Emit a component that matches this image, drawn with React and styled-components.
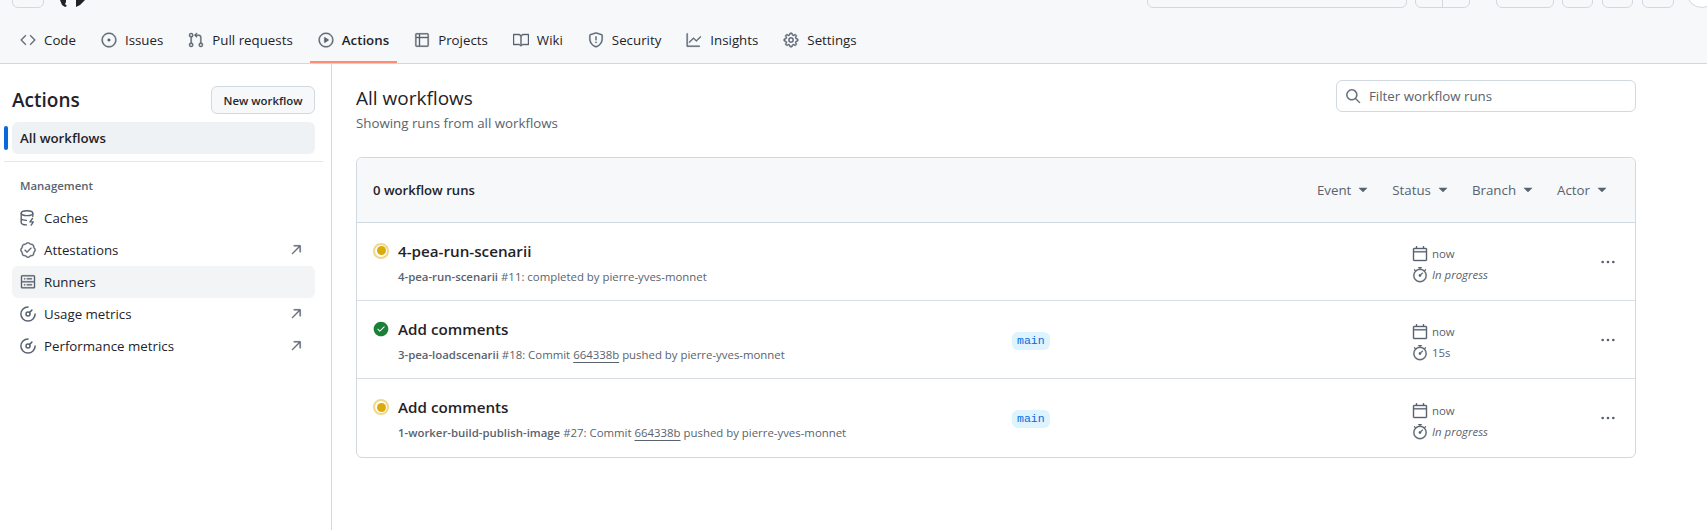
import React from "react";
import styled, { createGlobalStyle, css } from "styled-components";
import {
  GoCode, GoIssueOpened, GoGitPullRequest, GoPlay, GoTable, GoBook, GoShield, GoGraph, GoGear,
  GoSearch, GoTriangleDown, GoKebabHorizontal, GoCalendar, GoStopwatch, GoArrowUpRight,
  GoVerified, GoServer, GoCheckCircleFill,
} from "react-icons/go";

const GlobalStyle = createGlobalStyle`
  html, body { margin: 0; padding: 0; background: #fff; }
  body {
    font-family: "Open Sans", "Noto Sans", "Liberation Sans", sans-serif;
    font-size: 13.3px;
    color: #1f2328;
    overflow: hidden;
  }
`;

// the Go set is drawn on a 24 grid, so at 16px the strokes come out too thin
const heavyIcon = css`
  svg {
    color: #59636e;
    flex: none;
    stroke: currentColor;
    stroke-width: 0.6;
  }
`;

const Page = styled.div`
  width: 1707px;
  height: 530px;
  display: flex;
  flex-direction: column;
  overflow: hidden;
`;

const Header = styled.header`
  height: 64px;
  flex: none;
  box-sizing: border-box;
  background: #f6f8fa;
  border-bottom: 1px solid #d1d9e0;
`;

const TopBar = styled.div`
  height: 8px;
  display: flex;
  align-items: flex-end;
  overflow: hidden;
`;

const TopBox = styled.div`
  flex: none;
  box-sizing: border-box;
  height: 32px;
  width: ${(p) => p.$w}px;
  margin-left: ${(p) => p.$ml}px;
  border: 1px solid #d1d9e0;
  border-radius: 6px;
`;

const SplitBox = styled(TopBox)`
  display: flex;
  justify-content: center;
  &::after {
    content: "";
    width: 1px;
    background: #d1d9e0;
  }
`;

const Avatar = styled(TopBox)`
  border-radius: 50%;
  background: #fff;
`;

const Tabs = styled.nav`
  display: flex;
  padding: 16px 0 0 12px;
  gap: 9px;
`;

const Tab = styled.div`
  position: relative;
  display: flex;
  align-items: center;
  gap: 8px;
  height: 32px;
  padding: 0 8px;
  font-weight: ${(p) => (p.$active ? 600 : 400)};
  color: #1f2328;
  ${heavyIcon}
  ${(p) =>
    p.$active &&
    `&::after {
      content: "";
      position: absolute;
      left: 0;
      right: 0;
      bottom: -7px;
      height: 2px;
      background: #fd8c73;
    }`}
`;

const Body = styled.div`
  flex: 1;
  display: flex;
`;

const Sidebar = styled.aside`
  width: 332px;
  flex: none;
  box-sizing: border-box;
  border-right: 1px solid #d1d9e0;
  padding: 21px 8px 0 4px;
`;

const SideHead = styled.div`
  display: flex;
  align-items: center;
  justify-content: space-between;
  padding: 0 8px;
  height: 30px;
`;

const SideTitle = styled.h2`
  margin: 0;
  font-size: 19px;
  font-weight: 600;
`;

const NewButton = styled.button`
  box-sizing: border-box;
  width: 104px;
  height: 28px;
  padding: 0;
  font: inherit;
  font-size: 11.4px;
  font-weight: 600;
  color: #25292e;
  background: #f6f8fa;
  border: 1px solid #d1d9e0;
  border-radius: 6px;
`;

const ActiveWrap = styled.div`
  position: relative;
  margin: 7px 8px 0;
  &::before {
    content: "";
    position: absolute;
    left: -8px;
    top: 4px;
    bottom: 4px;
    width: 4px;
    border-radius: 6px;
    background: #0969da;
  }
`;

const SideItem = styled.div`
  display: flex;
  align-items: center;
  gap: 8px;
  height: 32px;
  padding: 0 11px 0 8px;
  margin: ${(p) => (p.$flush ? "0" : "0 8px")};
  border-radius: 6px;
  background: ${(p) => (p.$active ? "#eff2f5" : p.$hover ? "#f2f4f6" : "transparent")};
  font-weight: ${(p) => (p.$active ? 600 : 400)};
  ${heavyIcon}
`;

const ItemLabel = styled.span`
  flex: 1;
`;

const Divider = styled.div`
  height: 1px;
  background: #e3e7eb;
  margin-top: 7px;
`;

const SideGroup = styled.div`
  font-size: 11.4px;
  font-weight: 600;
  color: #59636e;
  padding: 0 16px;
  height: 32px;
  box-sizing: border-box;
  display: flex;
  align-items: center;
  margin: 7px 0 1px;
`;

const Main = styled.main`
  flex: 1;
  padding: 16px 71px 0 24px;
  min-width: 0;
`;

const MainHead = styled.div`
  display: flex;
  justify-content: space-between;
  align-items: flex-start;
  height: 77px;
`;

const MainTitle = styled.h1`
  margin: 4px 0 0;
  font-size: 19px;
  line-height: 28px;
  font-weight: 400;
`;

const Subtitle = styled.p`
  margin: 1px 0 0;
  color: #59636e;
  font-size: 13.3px;
  line-height: 20px;
`;

const Filter = styled.div`
  box-sizing: border-box;
  width: 300px;
  height: 32px;
  display: flex;
  align-items: center;
  gap: 8px;
  padding: 0 12px 0 8px;
  border: 1px solid #d1d9e0;
  border-radius: 6px;
  color: #59636e;
  ${heavyIcon}
`;

const Card = styled.section`
  border: 1px solid #d1d9e0;
  border-radius: 6px;
`;

const CardHead = styled.div`
  height: 64px;
  display: flex;
  align-items: center;
  justify-content: space-between;
  padding: 0 25px 0 16px;
  background: #f6f8fa;
  border-bottom: 1px solid #d1d9e0;
  border-radius: 6px 6px 0 0;
`;

const CountLabel = styled.strong`
  font-size: 13.1px;
  font-weight: 600;
`;

const Filters = styled.div`
  display: flex;
  gap: 21px;
`;

const FilterItem = styled.div`
  display: flex;
  align-items: center;
  gap: 4px;
  color: #59636e;
  svg { flex: none; }
`;

const Row = styled.article`
  box-sizing: border-box;
  height: 78px;
  display: grid;
  grid-template-columns: 639px 400px 1fr 24px;
  align-items: center;
  padding: 0 15px 0 16px;
  border-bottom: 1px solid #d8dee4;
  &:last-child { border-bottom: 0; }
`;

const RunInfo = styled.div`
  display: grid;
  grid-template-columns: 25px 1fr;
  row-gap: 5px;
  align-items: center;
  margin-top: 1px;
`;

const RunTitle = styled.div`
  font-size: 15.2px;
  line-height: 24px;
  font-weight: 600;
`;

const RunMeta = styled.div`
  grid-column: 2;
  font-size: 11.4px;
  line-height: 18px;
  color: #59636e;
  b { font-weight: 600; }
`;

const Sha = styled.span`
  text-decoration: underline;
  text-underline-offset: 3px;
`;

const Branch = styled.code`
  display: inline-block;
  font-family: "Liberation Mono", monospace;
  font-size: 11.5px;
  line-height: 18px;
  padding: 0 5px;
  color: #0969da;
  background: #ddf4ff;
  border-radius: 6px;
`;

const Times = styled.div`
  display: flex;
  flex-direction: column;
  gap: 3px;
  margin-top: 6px;
`;

const TimeLine = styled.div`
  display: flex;
  align-items: center;
  gap: 4px;
  font-size: 11.4px;
  line-height: 18px;
  color: #59636e;
  font-style: ${(p) => (p.$italic ? "italic" : "normal")};
  ${heavyIcon}
`;

const More = styled.div`
  display: flex;
  justify-content: center;
  color: #59636e;
`;

const Pending = styled.span`
  width: 16px;
  height: 16px;
  box-sizing: border-box;
  border-radius: 50%;
  border: 2px solid #f0d78c;
  display: flex;
  align-items: center;
  justify-content: center;
  &::after {
    content: "";
    width: 9px;
    height: 9px;
    border-radius: 50%;
    background: #dbab0a;
  }
`;

const Success = styled(GoCheckCircleFill)`
  color: #1a7f37;
`;

// octicons "cache" and "meter" are not in this react-icons build
const CacheIcon = ({ size }) => (
  <svg width={size} height={size} viewBox="0 0 16 16" fill="none" style={{ strokeWidth: 1.4 }} strokeLinecap="round">
    <ellipse cx="7" cy="3.2" rx="5.8" ry="2.4" />
    <path d="M1.2 3.2v9.3c0 1.4 2.3 2.4 5.3 2.4M12.8 3.2v3.3M1.2 8c0 1.3 2.2 2.3 5.3 2.4" />
    <path d="M12.5 8.5l-2.6 3.4h3.4l-2.1 3.2" strokeLinejoin="round" />
  </svg>
);

const MeterIcon = ({ size }) => (
  <svg width={size} height={size} viewBox="0 0 16 16" fill="none" style={{ strokeWidth: 1.5 }} strokeLinecap="round">
    <path d="M8 .9A7.1 7.1 0 1 0 15.1 8" />
    <path d="M11.9 4.1L9.4 6.6" />
    <circle cx="8" cy="8" r="2" />
  </svg>
);

const tabs = [
  ["Code", GoCode],
  ["Issues", GoIssueOpened],
  ["Pull requests", GoGitPullRequest],
  ["Actions", GoPlay, true],
  ["Projects", GoTable],
  ["Wiki", GoBook],
  ["Security", GoShield],
  ["Insights", GoGraph],
  ["Settings", GoGear],
];

const management = [
  ["Caches", CacheIcon],
  ["Attestations", GoVerified, true],
  ["Runners", GoServer, false, true],
  ["Usage metrics", MeterIcon, true],
  ["Performance metrics", MeterIcon, true],
];

const runs = [
  {
    title: "4-pea-run-scenarii",
    workflow: "4-pea-run-scenarii",
    number: "#11: completed by pierre-yves-monnet",
    duration: "In progress",
  },
  {
    title: "Add comments",
    workflow: "3-pea-loadscenarii",
    number: "#18: Commit ",
    sha: "664338b",
    branch: "main",
    done: true,
    duration: "15s",
  },
  {
    title: "Add comments",
    workflow: "1-worker-build-publish-image",
    number: "#27: Commit ",
    sha: "664338b",
    branch: "main",
    duration: "In progress",
  },
];

export default function App() {
  return (
    <Page>
      <GlobalStyle />
      <Header>
        <TopBar>
          <TopBox $ml={12} $w={32} />
          <svg width="26" height="8" viewBox="0 0 26 8" style={{ marginLeft: 16, flex: "none" }}>
            <path d="M0 0h6v2L5 4l2 2-2 1-3-2z M16 0h9l-5 5-4 2z" fill="#1f2328" />
          </svg>
          <TopBox $ml={1061} $w={260} />
          <SplitBox $ml={8} $w={55} />
          <TopBox $ml={26} $w={58} />
          <TopBox $ml={8} $w={31} />
          <TopBox $ml={9} $w={31} />
          <TopBox $ml={9} $w={32} />
          <Avatar $ml={12} $w={32} />
        </TopBar>
        <Tabs>
          {tabs.map(([label, Icon, active]) => (
            <Tab key={label} $active={active}>
              <Icon size={16} />
              {label}
            </Tab>
          ))}
        </Tabs>
      </Header>
      <Body>
        <Sidebar>
          <SideHead>
            <SideTitle>Actions</SideTitle>
            <NewButton>New workflow</NewButton>
          </SideHead>
          <ActiveWrap>
            <SideItem $active $flush>All workflows</SideItem>
          </ActiveWrap>
          <Divider />
          <SideGroup>Management</SideGroup>
          {management.map(([label, Icon, external, hover]) => (
            <SideItem key={label} $hover={hover}>
              <Icon size={16} />
              <ItemLabel>{label}</ItemLabel>
              {external && <GoArrowUpRight size={16} />}
            </SideItem>
          ))}
        </Sidebar>
        <Main>
          <MainHead>
            <div>
              <MainTitle>All workflows</MainTitle>
              <Subtitle>Showing runs from all workflows</Subtitle>
            </div>
            <Filter>
              <GoSearch size={16} />
              Filter workflow runs
            </Filter>
          </MainHead>
          <Card>
            <CardHead>
              <CountLabel>0 workflow runs</CountLabel>
              <Filters>
                {["Event", "Status", "Branch", "Actor"].map((f) => (
                  <FilterItem key={f}>
                    {f}
                    <GoTriangleDown size={16} />
                  </FilterItem>
                ))}
              </Filters>
            </CardHead>
            {runs.map((run) => (
              <Row key={run.workflow}>
                <RunInfo>
                  {run.done ? <Success size={16} /> : <Pending />}
                  <RunTitle>{run.title}</RunTitle>
                  <RunMeta>
                    <b>{run.workflow}</b> {run.number}
                    {run.sha && (
                      <>
                        <Sha>{run.sha}</Sha> pushed by pierre-yves-monnet
                      </>
                    )}
                  </RunMeta>
                </RunInfo>
                <div>{run.branch && <Branch>{run.branch}</Branch>}</div>
                <Times>
                  <TimeLine>
                    <GoCalendar size={16} />
                    now
                  </TimeLine>
                  <TimeLine $italic={run.duration === "In progress"}>
                    <GoStopwatch size={16} />
                    {run.duration}
                  </TimeLine>
                </Times>
                <More>
                  <GoKebabHorizontal size={16} />
                </More>
              </Row>
            ))}
          </Card>
        </Main>
      </Body>
    </Page>
  );
}
